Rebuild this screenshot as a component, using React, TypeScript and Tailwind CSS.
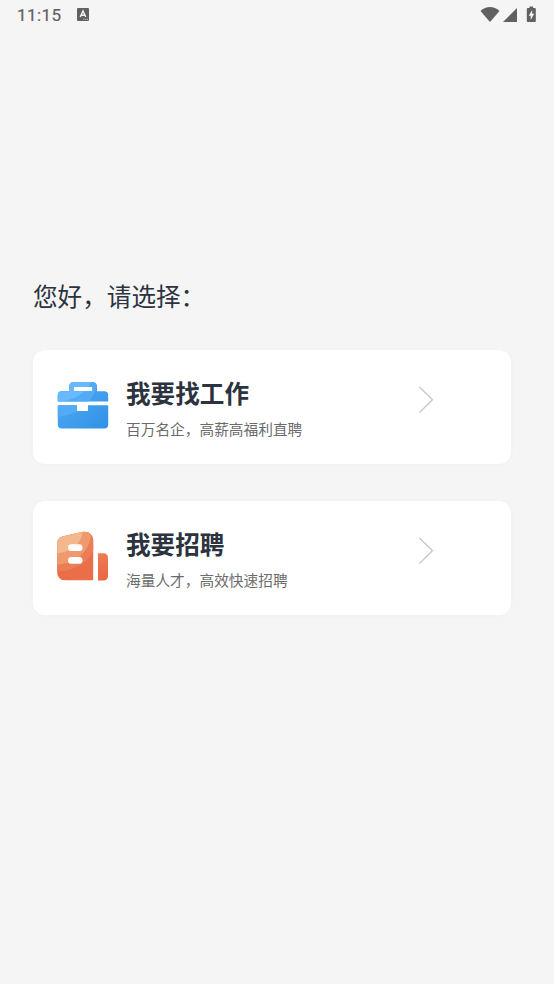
import type { ReactNode } from "react";

const BriefcaseIcon = () => (
  <svg width="52" height="50" viewBox="7 6 52 50" fill="none">
    <defs>
      <linearGradient id="case" x1="10" y1="8" x2="56" y2="56" gradientUnits="userSpaceOnUse">
        <stop stopColor="#55adf6" />
        <stop offset="1" stopColor="#2f91e6" />
      </linearGradient>
      <clipPath id="case-shape">
        <path
          fillRule="evenodd"
          clipRule="evenodd"
          d="M19.2 17.2V12.5a4.5 4.5 0 0 1 4.5-4.5h18.8a4.5 4.5 0 0 1 4.5 4.5v4.7h7.2a4 4 0 0 1 4 4v6.2H7.8v-6.2a4 4 0 0 1 4-4zM24 13v4.2h18.4V13zM7.8 31.2H27V37h11v-5.8h20.2v19.3a4 4 0 0 1-4 4H11.8a4 4 0 0 1-4-4z"
        />
      </clipPath>
    </defs>
    <g clipPath="url(#case-shape)">
      <path d="M7 6h52v50H7z" fill="url(#case)" />
      <path d="M7 6h41c-1 14-13 34-41 37z" fill="#53abf6" />
      <path d="M7 6h34c-2 11-14 20-34 22z" fill="#68b9fd" />
    </g>
  </svg>
);

const BuildingIcon = () => (
  <svg width="52" height="50" viewBox="7 7.500 52 50" fill="none">
    <defs>
      <linearGradient id="tower" x1="48" y1="30" x2="58" y2="58" gradientUnits="userSpaceOnUse">
        <stop stopColor="#ec7c55" />
        <stop offset="1" stopColor="#e96640" />
      </linearGradient>
      <clipPath id="tower-shape">
        <path d="M7.2 20.5c0-4 2-6.3 5.5-7.400L33 8.300c6-1.100 10.200 3.400 10.200 8.700v40H16c-5.500 0-8.800-3.500-8.800-8.500z" />
      </clipPath>
    </defs>
    <g clipPath="url(#tower-shape)">
      <path d="M7 7h37v51H7z" fill="#ea6f49" />
      <path d="M7 7h37v17c-1 10-16 24-37 23.500z" fill="#ec7e57" />
      <path d="M7 7h34c1 15-10 33-34 34z" fill="#f0986e" />
      <path d="M7 7h26c-2 14-11 21-26 23z" fill="#f3b98d" />
    </g>
    <rect x="18" y="20.800" width="14.500" height="6.800" rx="3.400" fill="#fff" />
    <rect x="18" y="33.500" width="14.500" height="6.800" rx="3.400" fill="#fff" />
    <path d="M48 29.700h5.500a4.500 4.500 0 0 1 4.500 4.500v18.300a4.500 4.500 0 0 1-4.500 4.500H48z" fill="url(#tower)" />
  </svg>
);

const roles: { title: string; description: string; icon: ReactNode }[] = [
  {
    title: "我要找工作",
    description: "百万名企，高薪高福利直聘",
    icon: <BriefcaseIcon />,
  },
  {
    title: "我要招聘",
    description: "海量人才，高效快速招聘",
    icon: <BuildingIcon />,
  },
];

const StatusBar = () => (
  <header className="flex h-8 items-center justify-between px-[17px] text-[#616161]">
    <div className="flex items-center gap-4">
      <span className="-mt-0.5 font-['Roboto',sans-serif] text-[17px] leading-[30px] tracking-[0.4px] [-webkit-text-stroke:0.2px]">
        11:15
      </span>
      <svg width="12" height="13" viewBox="0 0 12 13" className="-mt-[3px]">
        <rect width="12" height="13" rx="1" fill="currentColor" />
        <path d="M3.200 9 6 3l2.800 6M4.200 7.200h3.600" fill="none" stroke="#f5f5f5" strokeWidth="1.400" />
        <path d="M6.300 11.300h1M8.300 11.300h1M10.100 11.300h.9" stroke="#f5f5f5" strokeWidth=".8" />
      </svg>
    </div>
    <svg width="57" height="17" viewBox="0 0 57 17" fill="currentColor" className="-mt-1">
      <path d="M.5 5C6-.2 14-.2 19.500 5L10 16z" />
      <path d="M37 2v14H23z" />
      <path d="M47.800 2h1.700V.5h3.600V2h1.700a1 1 0 0 1 1 1v12a1 1 0 0 1-1 1h-7a1 1 0 0 1-1-1V3a1 1 0 0 1 1-1z" />
      <path d="M52.200 4v3.800h2L50.700 14v-4.300h-2z" fill="#f5f5f5" />
    </svg>
  </header>
);

const App = () => (
  <div className="min-h-screen bg-[#f5f5f5] font-['Noto_Sans_CJK_SC',sans-serif] text-[#2c333e]" lang="zh-CN">
    <StatusBar />
    <main className="pl-[33px] pr-[43px] pt-[245px]">
      <h1 className="text-[24.6px] leading-9">您好，请选择：</h1>
      <div className="mt-[37.4px] grid gap-[37px]">
        {roles.map((role) => (
          <button
            key={role.title}
            className="flex h-[113.6px] w-full items-start rounded-xl bg-white pl-6 text-left shadow-[0_0_4px_rgba(0,0,0,0.03)]"
          >
            <span className="mt-[30px]">{role.icon}</span>
            <span className="ml-[17px] mt-6 flex w-[292px] flex-col">
              <span className="text-[24.6px] font-bold leading-9">{role.title}</span>
              <span className="mt-2 text-[14.7px] leading-[22px] text-[#6b6b6b]">{role.description}</span>
            </span>
            <svg width="16" height="28" viewBox="0 0 16 28" fill="none" className="mt-[35.6px]">
              <path d="M1.500 1 14.500 13.800 1.500 26.500" stroke="#c4c4c4" strokeWidth="1.200" />
            </svg>
          </button>
        ))}
      </div>
    </main>
  </div>
);

export default App;
